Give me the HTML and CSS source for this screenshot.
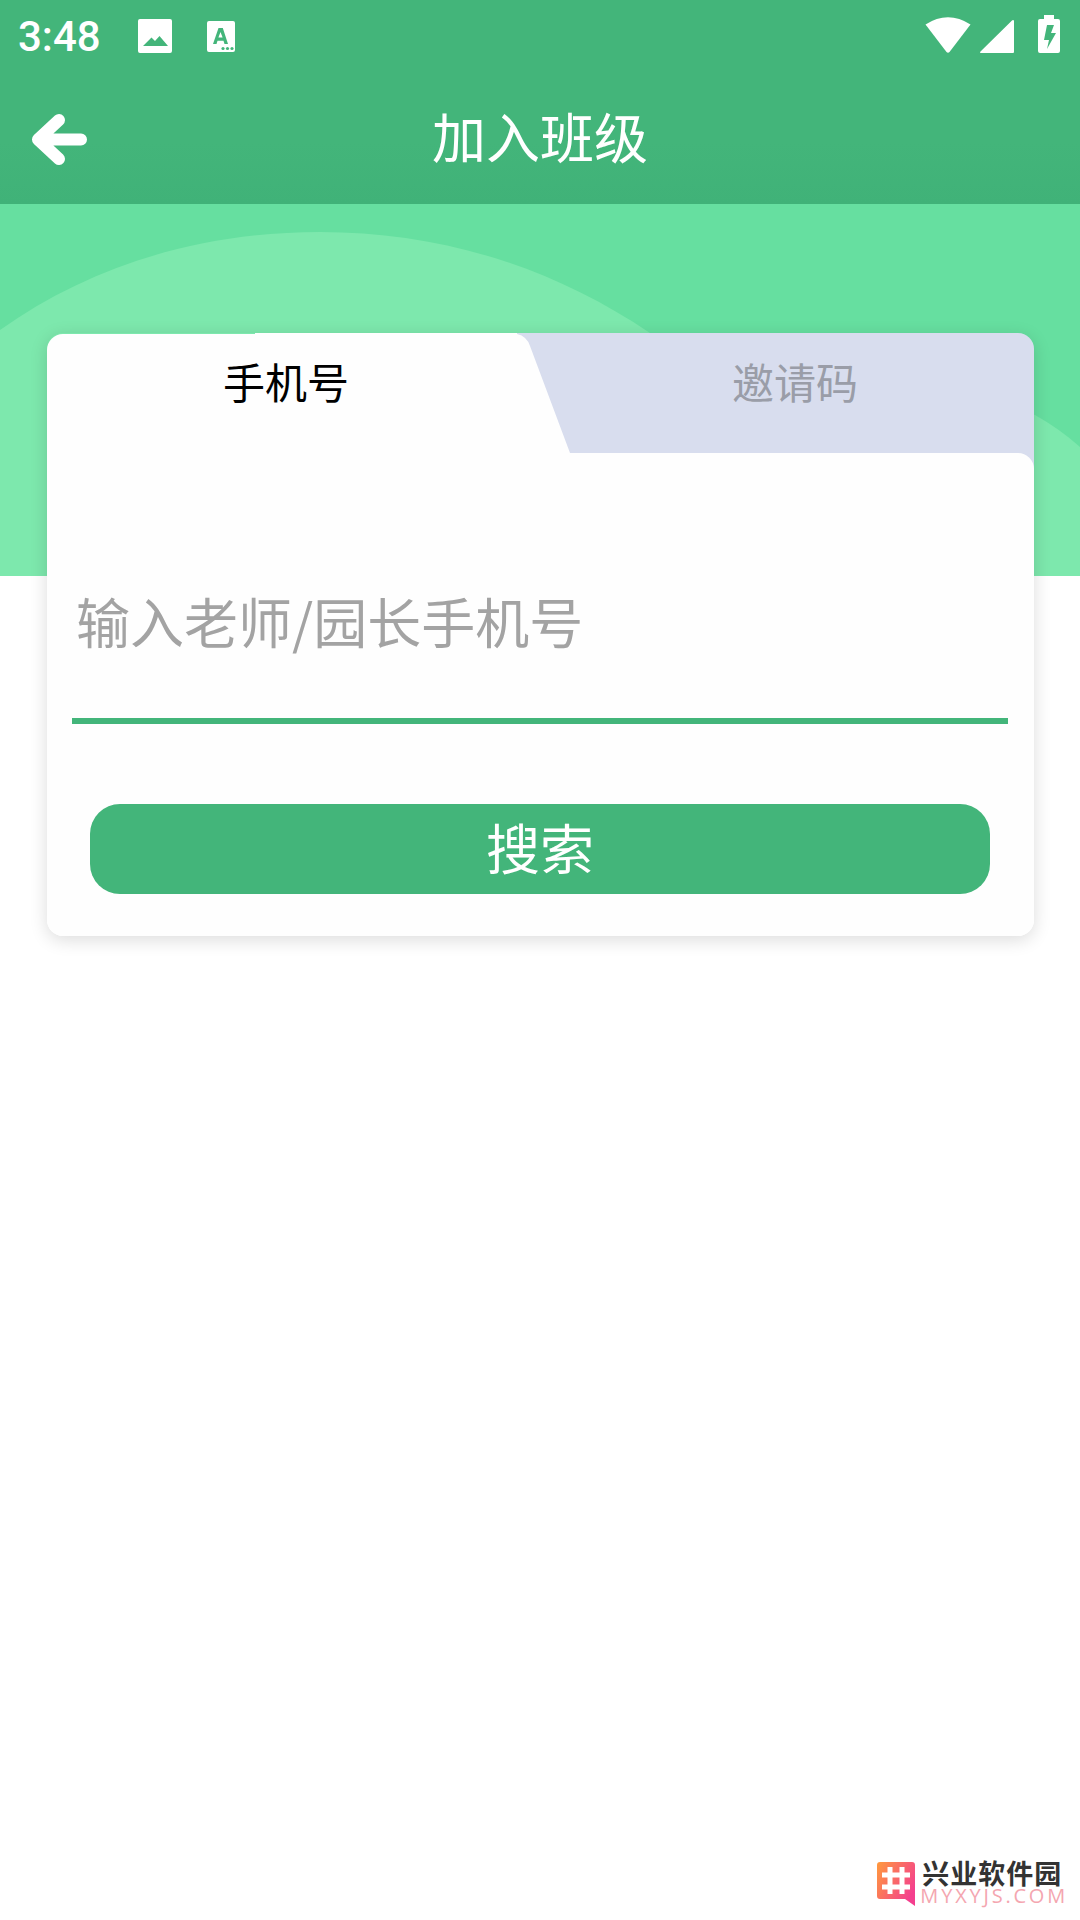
FILE: index.html
```html
<!DOCTYPE html>
<html lang="zh-CN">
<head>
    <meta charset="UTF-8">
    <meta name="viewport" content="width=device-width, initial-scale=1.0">
    <title>加入班级</title>
    <link rel="stylesheet" href="styles.css">
</head>
<body>
    <header class="top-bar">
        <div class="status-bar">
            <div class="status-left">
                <span class="clock">3:48</span>
                <svg class="icon-image" width="34" height="34" viewBox="0 0 34 34"><path fill="#fff" fill-rule="evenodd" d="M2 0h30a2 2 0 0 1 2 2v30a2 2 0 0 1-2 2H2a2 2 0 0 1-2-2V2a2 2 0 0 1 2-2zM5 27h25l-8.500-10-4.500 5-3.500-3.500z"/></svg>
                <svg class="icon-a" width="28" height="31" viewBox="0 0 28 31"><path fill="#fff" fill-rule="evenodd" d="M2 0h24a2 2 0 0 1 2 2v27a2 2 0 0 1-2 2H2a2 2 0 0 1-2-2V2a2 2 0 0 1 2-2zM11.500 7L6 23h3.500l1-3.200h6l1 3.200H21L15.800 7zM13.500 11l2.100 5.600h-4.200z"/><circle cx="16" cy="27.500" r="1.600" fill="#43b57a"/><circle cx="20.500" cy="27.500" r="1.600" fill="#43b57a"/><circle cx="25" cy="27.500" r="1.600" fill="#43b57a"/></svg>
            </div>
            <div class="status-right">
                <svg width="46" height="36" viewBox="0 0 46 36"><path fill="#fff" d="M0.500 7.500Q23-7 45.500 7.500L24.500 35q-1.500 1.500-3 0z"/></svg>
                <svg width="34" height="33" viewBox="0 0 34 33"><path fill="#fff" d="M33 0q1 0 1 1v31q0 1-1 1H1q-1.500 0-.5-1.500L32 .5q.5-.5 1-.5z"/></svg>
                <svg class="icon-battery" width="22" height="38" viewBox="0 0 22 38"><path fill="#fff" fill-rule="evenodd" d="M6 0h10v4h4a2 2 0 0 1 2 2v30a2 2 0 0 1-2 2H2a2 2 0 0 1-2-2V6a2 2 0 0 1 2-2h4zM9 10l-3 15h5l-2 9 9-16h-5l3-8z"/></svg>
            </div>
        </div>
        <div class="toolbar">
            <svg class="back" width="60" height="54" viewBox="0 0 60 54"><path fill="none" stroke="#fff" stroke-width="12" stroke-linecap="round" stroke-linejoin="round" d="M51 26.500H8M29 7L8 26.500 29 46"/></svg>
            <h1 class="title">加入班级</h1>
        </div>
    </header>

    <section class="hero">
        <svg class="hill" width="1080" height="372" viewBox="0 0 1080 372"><path fill="#7de8ad" d="M0 126C90 62 200 28 320 28C440 28 550 62 650 129L1035 211Q1060 225 1080 243V372H0Z"/></svg>
    </section>

    <main class="card">
        <div class="tabs">
            <svg class="tab-shape" width="987" height="136" viewBox="0 0 987 136"><path fill="#d8ddee" d="M400 0H971a16 16 0 0 1 16 16V136H400Z"/><path fill="#fefefe" d="M0 120V17a16 16 0 0 1 16-16H208V0H470V1a18 18 0 0 1 13 12L523 120Z"/></svg>
            <span class="tab active">手机号</span>
            <span class="tab">邀请码</span>
        </div>
        <div class="card-body">
            <div class="field">输入老师/园长手机号</div>
            <button class="search-btn">搜索</button>
        </div>
    </main>

    <div class="watermark">
        <svg class="wm-logo" width="38" height="44" viewBox="0 0 38 44">
            <defs><linearGradient id="logo-bg" x1="0" y1="0" x2="1" y2="0.600"><stop offset="0" stop-color="#ff9a3c"/><stop offset="1" stop-color="#f43f8e"/></linearGradient></defs>
            <path fill="url(#logo-bg)" d="M3 0H35a3 3 0 0 1 3 3V44L28 37H3a3 3 0 0 1-3-3V3a3 3 0 0 1 3-3z"/>
            <path fill="none" stroke="#fff" stroke-width="5" d="M13 5V32M25 5V32M5 13H33M5 25H33"/>
        </svg>
        <div class="watermark-text">
            <span class="wm-name">兴业软件园</span>
            <span class="wm-url">MYXYJS.COM</span>
        </div>
    </div>
</body>
</html>
```

FILE: styles.css
```css
* { box-sizing: border-box; margin: 0; padding: 0; }
body { position: relative; width: 1080px; height: 1920px; overflow: hidden; background: #fff; font-family: "Noto Sans CJK SC", "Noto Sans", sans-serif; }

.top-bar { height: 204px; background: linear-gradient(#43b57a 70%, #40b278); color: #fff; }

.status-bar { display: flex; justify-content: space-between; align-items: center; height: 72px; padding: 0 20px 0 18px; }
.status-left { display: flex; align-items: center; }
.clock { width: 120px; padding-top: 2px; font-family: Roboto, sans-serif; font-size: 42px; font-weight: 500; line-height: 70px; }
.icon-a { margin-left: 35px; }
.status-right { display: flex; align-items: flex-end; gap: 9px; padding-bottom: 4px; }
.icon-battery { margin-left: 15px; }

.toolbar { position: relative; display: flex; justify-content: center; align-items: center; height: 132px; padding-bottom: 4px; }
.back { position: absolute; left: 30px; top: 41px; }
.title { font-size: 54px; font-weight: 400; line-height: 1; }

.hero { position: relative; height: 372px; background: #66dfa0; }
.hill { position: absolute; left: 0; top: 0; }

.card { position: relative; width: 987px; margin: -243px 0 0 47px; border-radius: 16px; box-shadow: 0 4px 18px rgba(0, 0, 0, 0.14); }

.tabs { position: relative; display: flex; gap: 31px; height: 120px; }
.tab-shape { position: absolute; left: 0; top: 0; }
.tab { position: relative; width: 478px; padding-top: 18px; text-align: center; font-size: 42px; line-height: 60px; color: #9a9da8; }
.tab.active { color: #000; }

.card-body { position: relative; height: 483px; padding: 0 26px 0 25px; border-radius: 0 16px 16px 16px; background: #fefefe; }
.field { height: 271px; padding: 126px 0 0 4px; border-bottom: 6px solid #43b57a; font-size: 54px; line-height: 84px; color: #a3a3a3; }
.search-btn { display: block; width: 900px; height: 90px; margin: 80px 0 0 18px; padding-bottom: 4px; border: none; border-radius: 30px; background: #43b57a; color: #fff; font-family: inherit; font-size: 54px; line-height: 86px; }

.watermark { position: absolute; right: 12px; top: 1859px; display: flex; gap: 5px; }
.wm-logo { margin-top: 3px; }
.watermark-text { display: flex; flex-direction: column; }
.wm-name { margin-left: 2px; font-size: 27px; font-weight: 700; line-height: 28px; letter-spacing: 1px; color: #333; }
.wm-url { font-family: "Open Sans", sans-serif; font-size: 20px; line-height: 18px; letter-spacing: 2.8px; color: #f4a6b0; }
```
